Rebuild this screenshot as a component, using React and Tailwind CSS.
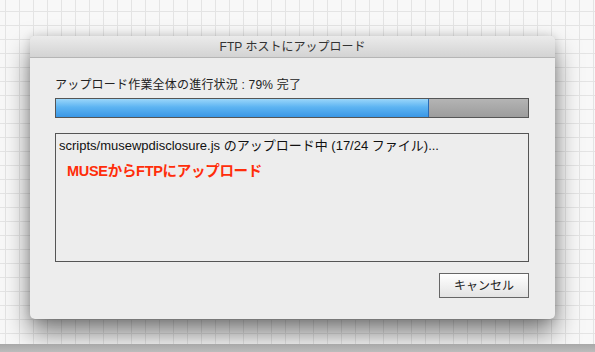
import React from "react";

const font = "font-['Liberation_Sans','Noto_Sans_CJK_JP',sans-serif]";

const App = () => {
  const done = 79;

  return (
    <div
      className={`w-[595px] h-[352px] overflow-hidden flex flex-col bg-[#f8f8f8] bg-[linear-gradient(#e4e4e4_1px,transparent_1px),linear-gradient(90deg,#e4e4e4_1px,transparent_1px)] bg-[size:14px_14px] bg-[position:5px_11px] ${font}`}
    >
      <div className="h-[36px] shrink-0" />
      <div className="ml-[30px] w-[525px] h-[283px] shrink-0 flex flex-col rounded-[5px] bg-[#ededed] shadow-[0_14px_26px_rgba(0,0,0,0.5),0_0_10px_rgba(0,0,0,0.15)]">
        <div className="h-[22px] flex items-center justify-center rounded-t-[5px] border-b border-[#b5b5b5] bg-[linear-gradient(#ebebeb,#d3d3d3)] text-[12px] text-[#333]">
          FTP ホストにアップロード
        </div>

        <div className="flex flex-col pl-[25px] pr-[26px] pt-[19px]">
          <div className="text-[12px] leading-[16px] text-[#222] tracking-[0.2px]">
            アップロード作業全体の進行状況 : 79% 完了
          </div>

          <div className="mt-[5px] h-[20px] flex border border-[#555] bg-[linear-gradient(#b4b4b4,#9c9c9c)]">
            <div
              className="h-full border-r border-[#2a6bb5] bg-[linear-gradient(#9ad6fa,#5db4f2_45%,#3a97e6)]"
              style={{ width: `${done}%` }}
            />
          </div>

          <div className="mt-[15px] h-[129px] border border-[#555] pl-[3px] pt-[4px] text-[13px] leading-[16px] text-[#111]">
            <div>scripts/musewpdisclosure.js のアップロード中 (17/24 ファイル)...</div>
            <div className="mt-[9px] ml-[8px] text-[14.5px] font-bold leading-[16px] text-[#ff2d0a] tracking-[-0.3px]">
              MUSEからFTPにアップロード
            </div>
          </div>

          <div className="mt-[11px] flex justify-end">
            <button className="w-[90px] h-[25px] border border-[#666] bg-[linear-gradient(#ffffff,#e3e3e3)] text-[12px] text-[#222]">
              キャンセル
            </button>
          </div>
        </div>
      </div>
      <div className="flex-1" />
      <div className="h-[8px] shrink-0 bg-[linear-gradient(#a8a8a8,#bcbcbc)]" />
    </div>
  );
};

export default App;
